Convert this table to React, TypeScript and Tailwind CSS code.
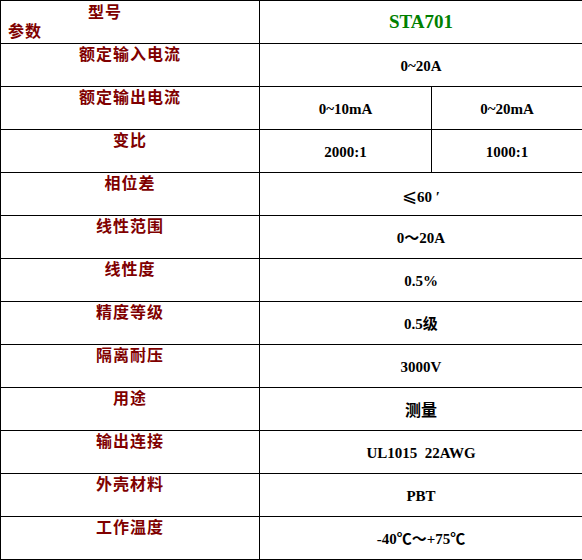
import React from 'react';

type Row = {
  label: string;
  values: React.ReactNode[];
  cjk?: boolean;
};

const rows: Row[] = [
  { label: '额定输入电流', values: ['0~20A'] },
  { label: '额定输出电流', values: ['0~10mA', '0~20mA'] },
  { label: '变比', values: ['2000:1', '1000:1'] },
  {
    label: '相位差',
    values: [
      <>
        <span className="font-normal text-[18px] [font-family:'DejaVu_Sans',sans-serif]">⩽</span>60 ′
      </>,
    ],
  },
  { label: '线性范围', values: ['0～20A'] },
  { label: '线性度', values: ['0.5%'] },
  { label: '精度等级', values: ['0.5级'] },
  { label: '隔离耐压', values: ['3000V'] },
  { label: '用途', values: ['测量'], cjk: true },
  { label: '输出连接', values: ['UL1015  22AWG'] },
  { label: '外壳材料', values: ['PBT'] },
  { label: '工作温度', values: ['-40℃～+75℃'] },
];

const labelCls =
  "border border-black h-[43px] align-top pt-0 text-center text-[16px] leading-[19px] font-bold tracking-[1px] text-[#800000] [font-family:'Noto_Sans_CJK_SC',sans-serif]";
const valueCls =
  "border border-black h-[43px] align-middle pt-[3px] text-center text-[15px] font-bold text-black whitespace-pre [font-family:'Liberation_Serif','Noto_Sans_CJK_SC',serif]";

export default function App() {
  return (
    <div className="w-[582px] h-[560px] bg-white overflow-hidden">
      <table className="w-[582px] table-fixed border-collapse">
        <colgroup>
          <col className="w-[259px]" />
          <col className="w-[172px]" />
          <col className="w-[151px]" />
        </colgroup>
        <tbody>
          <tr>
            <td className="border border-black h-[43px] align-top p-0 text-[16px] leading-[19px] font-bold tracking-[1px] text-[#800000] [font-family:'Noto_Sans_CJK_SC',sans-serif]">
              <div className="pl-[87px] pt-[1px]">型号</div>
              <div className="pl-[7px]">参数</div>
            </td>
            <td
              colSpan={2}
              className="border border-black h-[43px] align-middle text-center text-[19px] font-bold text-[#008000] [font-family:'Liberation_Serif',serif]"
            >
              STA701
            </td>
          </tr>
          {rows.map((r) => (
            <tr key={r.label}>
              <td className={labelCls}>{r.label}</td>
              {r.values.length === 1 ? (
                <td colSpan={2} className={valueCls + (r.cjk ? ' text-[16px]' : '')}>
                  {r.values[0]}
                </td>
              ) : (
                r.values.map((v, i) => (
                  <td key={i} className={valueCls}>
                    {v}
                  </td>
                ))
              )}
            </tr>
          ))}
        </tbody>
      </table>
    </div>
  );
}
